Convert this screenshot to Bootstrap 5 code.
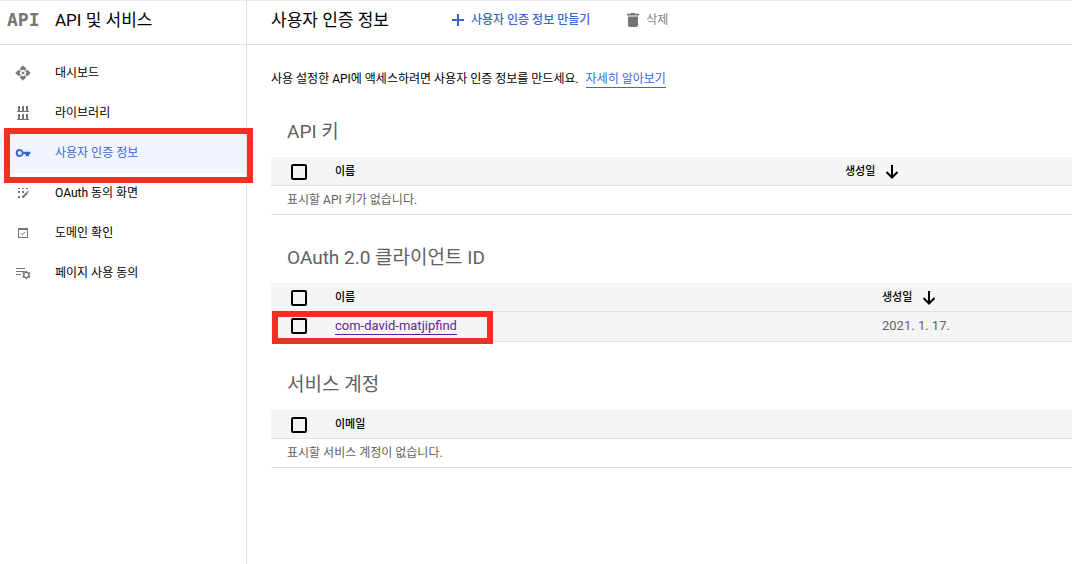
<!DOCTYPE html>
<html lang="ko">
<head>
<meta charset="utf-8">
<meta name="viewport" content="width=device-width, initial-scale=1">
<title>사용자 인증 정보</title>
<link href="https://cdn.jsdelivr.net/npm/bootstrap@5.3.0/dist/css/bootstrap.min.css" rel="stylesheet">
<style>
  body { font-family: Roboto, "Noto Sans CJK KR", sans-serif; font-size: 12px; line-height: 20px; color: #000; border-top: 1px solid #ececec; }
  a { color: #3b66d1; }
  .side { width: 247px; border-right: 1px solid #e0e0e0; }
  .bar { height: 44px; border-bottom: 1px solid #e0e0e0; padding-bottom: 6px; }
  .bar-title { font-size: 17px; line-height: 24px; font-weight: 400; }
  .logo { width: 55px; padding-left: 7px; font: bold 18px/24px "DejaVu Sans Mono", monospace; color: #757575; }
  .side-link { height: 40px; padding-left: 15px; gap: 24px; color: #000; text-decoration: none; }
  .side-link svg { width: 16px; height: 16px; fill: #757575; }
  .side-link.current { background: #f0f5fe; color: #3b66d1; }
  .side-link.current svg { fill: #3b66d1; }
  .marker { position: absolute; border: 6px solid #ec3223; pointer-events: none; z-index: 2; }
  .marker-nav { inset: -5px -7px -10px 4px; }
  .marker-row { top: -1px; left: 1px; width: 221px; height: 33px; }
  .tools { margin-left: 62px; gap: 36px; }
  .tool { border: 0; background: none; padding: 0; font-weight: 500; color: #3b66d1; gap: 6px; }
  .tool:disabled { color: #808080; font-weight: 400; }
  .body-pad { padding: 24px 0 0 24px; }
  .under { text-decoration: none; border-bottom: 1px solid; line-height: 16px; display: inline-block; }
  .sec-title { font-size: 19px; line-height: 28px; font-weight: 400; color: #616161; margin: 29px 0 11px; padding-left: 16px; }
  .grid { width: 100%; table-layout: fixed; border-collapse: separate; border-spacing: 0; }
  .grid th, .grid td { padding: 0; height: 29px; border-bottom: 1px solid #e0e0e0; vertical-align: middle; line-height: 20px; }
  .grid th { background: #f5f5f5; font-size: 11px; font-weight: 500; }
  .grid td { color: #616161; }
  .grid thead th { padding-top: 2px; }
  .grid .picked td { background: #f5f5f5; font-size: 13px; height: 30px; padding-bottom: 2px; }
  .col-tick { width: 64px; }
  .col-date { width: 227px; }
  .col-date-narrow { width: 190px; }
  .grid td.none { padding-left: 16px; }
  .tick { appearance: none; display: block; width: 16px; height: 16px; margin: 0 0 0 20px; border: 2px solid #000; border-radius: 2px; background: transparent; }
  .tick:checked { background: #000; }
  .visited-link { color: #6a1b9a; }
  .arrow { margin-left: 10px; }
</style>
</head>
<body>
<div class="d-flex min-vh-100">
  <aside class="side flex-shrink-0">
    <div class="bar d-flex align-items-center">
      <span class="logo">API</span>
      <h2 class="bar-title m-0">API 및 서비스</h2>
    </div>
    <nav class="pt-2 d-flex flex-column">
      <a class="side-link d-flex align-items-center" href="#">
        <svg viewBox="0 0 24 24" stroke="#757575"><path d="M14 12l-2 2-2-2 2-2 2 2zm-2-6l2.100 2.100 2.500-2.500L12 1 7.400 5.600l2.500 2.500L12 6zm-6 6l2.100-2.100-2.500-2.500L1 12l4.600 4.600 2.500-2.500L6 12zm12 0l-2.100 2.100 2.500 2.500L23 12l-4.600-4.600-2.500 2.500L18 12zm-6 6l-2.100-2.100-2.500 2.500L12 23l4.600-4.600-2.500-2.500L12 18z"/></svg>
        대시보드</a>
      <a class="side-link d-flex align-items-center" href="#">
        <svg viewBox="0 0 16 16"><path d="M3 1h2v5h2V1h2v5h2V1h2v5h1v1H2V6h1zM3 9h2v5h2V9h2v5h2V9h2v5h1v1H2v-1h1z"/></svg>
        라이브러리</a>
      <div class="position-relative">
        <a class="side-link current d-flex align-items-center" href="#" aria-current="page">
          <svg viewBox="0 0 24 24"><path d="M12.650 10A6 6 0 0 0 7 6a6 6 0 0 0 0 12 6 6 0 0 0 5.650-4H16v3h5v-3h2v-4H12.650zM7 15a3 3 0 1 1 0-6 3 3 0 0 1 0 6z"/></svg>
          사용자 인증 정보</a>
        <span class="marker marker-nav"></span>
      </div>
      <a class="side-link d-flex align-items-center" href="#">
        <svg viewBox="0 0 16 16"><path d="M3 3h2v1H3zM7 3h2v1H7zM11 3h2v1h-2zM3 6h2v2H3zM7 6h2v2H7zM3 11h2v2H3zM7 11.500l4.700-4.700 1.400 1.400L8.400 13H7zM12.200 6.300l.6-.6 1.400 1.400-.6.600z"/></svg>
        OAuth 동의 화면</a>
      <a class="side-link d-flex align-items-center" href="#">
        <svg viewBox="0 0 16 16"><path fill-rule="evenodd" d="M3 3h10v10H3zM4 5v7h8V5z"/><path d="M5.700 8.200l1.600 1.600 3-3" fill="none" stroke="#757575"/></svg>
        도메인 확인</a>
      <a class="side-link d-flex align-items-center" href="#">
        <svg viewBox="0 0 16 16"><path d="M1 3h9v1H1zM1 6h9v1H1zM1 9h5v1H1z"/><circle cx="11.300" cy="10" r="2.600" fill="none" stroke="#757575" stroke-width="1.400"/><path d="M10.500 5.700h1.600v1.500h-1.600zM10.500 12.800h1.600v1.500h-1.600zM7.200 8.500l.8-1.400 1.300.8-.8 1.400zM13.300 12.100l.8-1.400 1.300.8-.8 1.400zM7.200 11.500l1.300-.8.8 1.400-1.300.8zM13.300 7.900l1.300-.8.8 1.400-1.300.8z"/></svg>
        페이지 사용 동의</a>
    </nav>
  </aside>

  <main class="flex-grow-1">
    <header class="bar d-flex align-items-center ps-4">
      <h1 class="bar-title m-0">사용자 인증 정보</h1>
      <div class="tools d-flex align-items-center">
        <button type="button" class="tool d-flex align-items-center">
          <svg width="14" height="14" viewBox="0 0 14 14"><path d="M7 1v12M1 7h12" stroke="#3b66d1" stroke-width="2"/></svg>
          사용자 인증 정보 만들기</button>
        <button type="button" class="tool d-flex align-items-center" disabled>
          <svg width="14" height="16" viewBox="0 0 14 16" fill="#757575"><path d="M2 4.500h10V13a2 2 0 0 1-2 2H4a2 2 0 0 1-2-2zM1 1.800h3.500L5.300 1h3.400l.8.800H13v1.700H1z"/></svg>
          삭제</button>
      </div>
    </header>

    <div class="body-pad">
      <p class="m-0">사용 설정한 API에 액세스하려면 사용자 인증 정보를 만드세요. <a class="under ms-1" href="#">자세히 알아보기</a></p>

      <h2 class="sec-title">API 키</h2>
      <table class="grid">
        <colgroup><col class="col-tick"><col><col class="col-date"></colgroup>
        <thead><tr>
          <th><input class="tick" type="checkbox" aria-label="모든 API 키 선택"></th>
          <th>이름</th>
          <th>생성일<svg class="arrow" width="14" height="14" viewBox="0 0 14 14"><path d="M7 0v12M1.500 7L7 12.500 12.500 7" fill="none" stroke="#000" stroke-width="2"/></svg></th>
        </tr></thead>
        <tbody><tr><td class="none" colspan="3">표시할 API 키가 없습니다.</td></tr></tbody>
      </table>

      <h2 class="sec-title">OAuth 2.0 클라이언트 ID</h2>
      <table class="grid">
        <colgroup><col class="col-tick"><col><col class="col-date-narrow"></colgroup>
        <thead><tr>
          <th><input class="tick" type="checkbox" aria-label="모든 클라이언트 선택"></th>
          <th>이름</th>
          <th>생성일<svg class="arrow" width="14" height="14" viewBox="0 0 14 14"><path d="M7 0v12M1.500 7L7 12.500 12.500 7" fill="none" stroke="#000" stroke-width="2"/></svg></th>
        </tr></thead>
        <tbody><tr class="picked">
          <td class="position-relative"><input class="tick" type="checkbox" aria-label="com-david-matjipfind"><span class="marker marker-row"></span></td>
          <td><a class="under visited-link" href="#">com-david-matjipfind</a></td>
          <td>2021. 1. 17.</td>
        </tr></tbody>
      </table>

      <h2 class="sec-title">서비스 계정</h2>
      <table class="grid">
        <colgroup><col class="col-tick"><col></colgroup>
        <thead><tr>
          <th><input class="tick" type="checkbox" aria-label="모든 서비스 계정 선택"></th>
          <th>이메일</th>
        </tr></thead>
        <tbody><tr><td class="none" colspan="2">표시할 서비스 계정이 없습니다.</td></tr></tbody>
      </table>
    </div>
  </main>
</div>
<script src="https://cdn.jsdelivr.net/npm/bootstrap@5.3.0/dist/js/bootstrap.bundle.min.js"></script>
</body>
</html>
